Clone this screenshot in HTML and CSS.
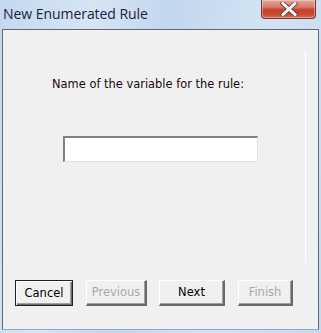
FILE: index.html
```html
<!DOCTYPE html>
<html>
<head>
<meta charset="utf-8">
<link rel="stylesheet" href="styles.css">
</head>
<body>
<div class="window">
  <div class="titlebar">
    <span class="title">New Enumerated Rule</span>
    <div class="close">
      <svg width="22" height="14" viewBox="0 0 22 14">
        <path d="M5 1.5 L17 12.5 M17 1.5 L5 12.5" stroke="#5a3a36" stroke-width="4.6" stroke-linecap="square" fill="none"/>
        <path d="M5 1.5 L17 12.5 M17 1.5 L5 12.5" stroke="#ffffff" stroke-width="3" stroke-linecap="square" fill="none"/>
      </svg>
    </div>
  </div>
  <div class="client">
    <div class="panel">
      <div class="label">Name of the variable for the rule:</div>
      <input class="field" type="text">
    </div>
    <div class="buttons">
      <button class="btn default">Cancel</button>
      <button class="btn disabled">Previous</button>
      <button class="btn next">Next</button>
      <button class="btn disabled finish">Finish</button>
    </div>
  </div>
</div>
</body>
</html>
```
FILE: styles.css
```css
html, body {
  margin: 0;
  padding: 0;
}
body {
  width: 321px;
  height: 333px;
  overflow: hidden;
}
.window {
  width: 321px;
  height: 333px;
  box-sizing: border-box;
  display: flex;
  flex-direction: column;
  background: linear-gradient(100deg, #c4d8ee 0%, #d6e5f4 25%, #c2d6ec 45%, #d3e3f3 70%, #c6daef 100%);
}
.titlebar {
  height: 29px;
  display: flex;
  align-items: flex-start;
  justify-content: space-between;
  flex: none;
}
.title {
  font-family: "Open Sans", "Noto Sans", sans-serif;
  font-size: 14px;
  color: #1b2141;
  margin: 4px 0 0 3px;
  letter-spacing: -0.05px;
}
.close {
  width: 55px;
  height: 19px;
  margin-right: 5px;
  box-sizing: border-box;
  border: 1px solid #6e3a33;
  border-top: none;
  border-radius: 0 0 4px 4px;
  background: linear-gradient(180deg, #e6a79a 0%, #d67a69 40%, #c43f2a 55%, #cc4b33 80%, #d86a4f 100%);
  display: flex;
  align-items: center;
  justify-content: center;
  box-shadow: inset 0 0 0 1px rgba(255,255,255,0.35);
}
.client {
  flex: 1;
  margin: 0 2px 3px 2px;
  background: #f0f0f0;
  border-top: 1px solid #5f6a78;
  border-left: 1px solid #5f6a78;
  border-right: 1px solid #5f6a78;
  border-bottom: 1px solid #8fa9c8;
  display: flex;
  flex-direction: column;
}
.panel {
  margin: 21px 12px 0 12px;
  height: 212px;
  border-right: 1px solid #ffffff;
  display: flex;
  flex-direction: column;
}
.label {
  font-family: "DejaVu Sans", sans-serif;
  font-size: 11.45px;
  color: #1a0a0a;
  margin: 26px 0 0 37px;
}
.field {
  margin: 45px 0 0 48px;
  width: 195px;
  height: 26px;
  box-sizing: border-box;
  background: #fff;
  border-style: solid;
  border-width: 2px 1px 1px 2px;
  border-color: #808080 #e3e3e3 #e3e3e3 #808080;
  padding: 0;
  outline: none;
}
.buttons {
  display: flex;
  margin: 17px 0 0 12px;
  gap: 0;
}
.btn {
  height: 26px;
  box-sizing: border-box;
  background: #f0f0f0;
  font-family: "DejaVu Sans", sans-serif;
  font-size: 11.5px;
  color: #000;
  padding: 0 0 1px 0;
  border-style: solid;
  border-width: 1px 2px 2px 1px;
  border-color: #ffffff #6a6a6a #6a6a6a #ffffff;
  box-shadow: inset -1px -1px 0 #a0a0a0;
}
.btn.default {
  width: 58px;
  border: 1px solid #222;
  box-shadow: inset 1px 1px 0 #fff, inset -1px -1px 0 #6a6a6a, inset -2px -2px 0 #a0a0a0;
}
.btn.disabled {
  color: #a8a8a8;
  width: 61px;
  margin-left: 13px;
}
.btn.next {
  width: 66px;
  margin-left: 12px;
}
.btn.finish {
  width: 55px;
  margin-left: 13px;
}
```
